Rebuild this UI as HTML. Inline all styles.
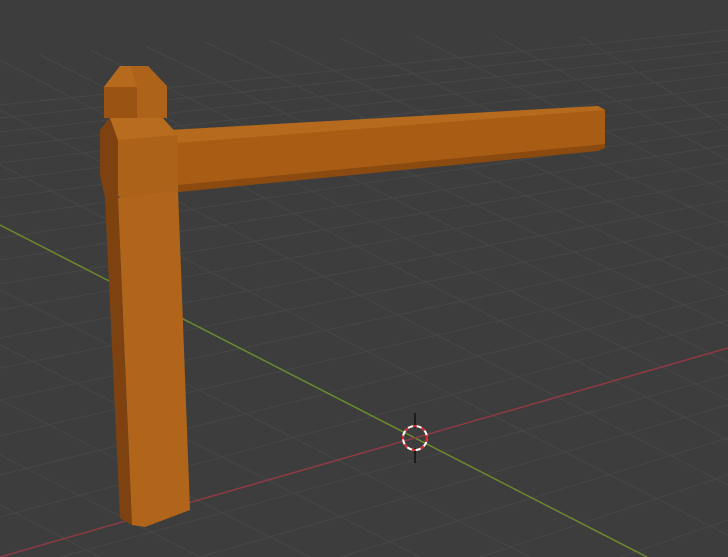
<!DOCTYPE html>
<html><head><style>
html,body{margin:0;padding:0;background:#3d3d3d;overflow:hidden}
svg{display:block}
</style></head><body>
<svg width="728" height="557" viewBox="0 0 728 557" xmlns="http://www.w3.org/2000/svg">
<rect width="728" height="557" fill="#3d3d3d"/>
<g stroke="#474747" stroke-width="1" fill="none">
<path d="M0 105L728 30M0 118L728 40M0 132L728 51M0 147L728 62M0 163L728 74M0 180L728 87M0 198L728 100M0 217L728 114M0 238L728 129M0 260L728 145M0 284L728 162M0 310L728 180M0 338L728 200M0 368L728 221M0 400L728 244M0 436L728 268M0 475L728 294M0 517L728 320M60 557L728 375M200 557L728 405M340 557L728 438M480 557L728 475M620 557L728 520"/>
<path d="M0 60L728 440M40 55L728 400M90 50L728 362M145 46L728 326M205 42L728 292M270 40L728 258M340 38L728 225M415 36L728 192M495 36L728 160M580 36L728 128M0 110L728 485M0 165L728 535M0 290L530 557M0 345L420 557M0 400L310 557M0 455L200 557M0 505L100 557"/>
</g>
<line x1="0" y1="225" x2="647" y2="557" stroke="#6b8a2e" stroke-width="1.5"/>
<line x1="0" y1="557" x2="728" y2="348" stroke="#8e3a44" stroke-width="1.5"/>
<line x1="415" y1="413" x2="415" y2="428" stroke="#111" stroke-width="1.5"/>
<line x1="415" y1="448" x2="415" y2="463" stroke="#111" stroke-width="1.5"/>
<circle cx="415" cy="438" r="12" fill="none" stroke="#fff" stroke-width="2"/>
<circle cx="415" cy="438" r="12" fill="none" stroke="#d22" stroke-width="2" stroke-dasharray="4 5"/>
<polygon points="170,130 598,106 605,110 605,145 598,150 178,192" fill="#a85c14"/>
<polygon points="170,130 598,106 605,110 178,143" fill="#b56a1e"/>
<polygon points="178,185 605,144 605,148 598,151 178,192" fill="#8a4a10"/>
<polygon points="105,198 118,198 132,525 120,518" fill="#7d4210"/>
<polygon points="118,198 178,190 190,510 145,527 132,525" fill="#b0651a"/>
<polygon points="100,130 110,118 160,115 178,135 178,190 120,198 100,175" fill="#ad6219"/>
<polygon points="100,130 110,118 118,140 118,198 105,198 100,175" fill="#7d4210"/>
<polygon points="110,118 160,115 178,135 118,140" fill="#b86c1f"/>
<polygon points="104,87 120,66 148,66 167,86 167,118 104,118" fill="#ae631a"/>
<polygon points="104,87 137,87 137,118 104,118" fill="#9a5312"/>
<polygon points="104,87 120,66 130,66 137,87" fill="#b66a1e"/>
</svg>
</body></html>
